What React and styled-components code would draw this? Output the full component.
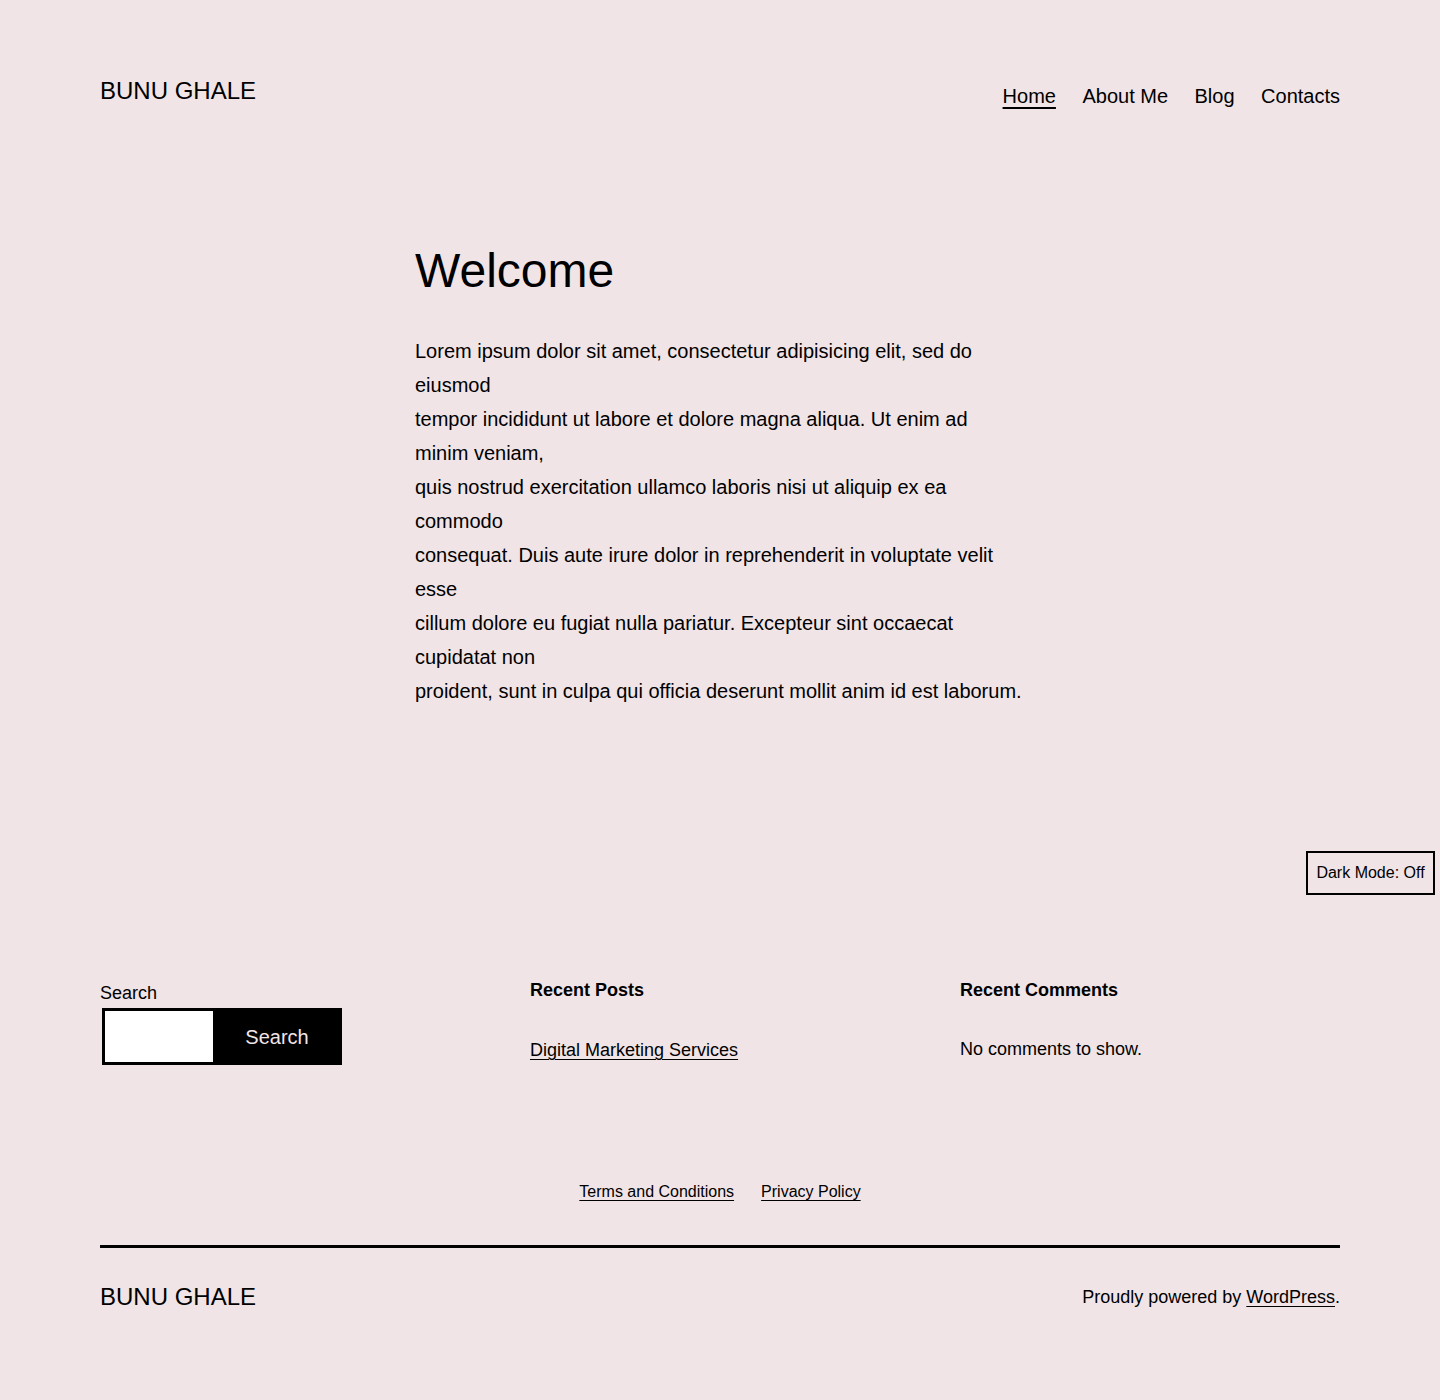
import React from "react";
import styled, { createGlobalStyle } from "styled-components";

const BG = "#f1e4e6";

const GlobalStyle = createGlobalStyle`
  html, body {
    margin: 0;
    padding: 0;
    background: ${BG};
  }
  body {
    font-family: "Liberation Sans", Arial, Helvetica, sans-serif;
    color: #000;
  }
  * { box-sizing: border-box; }
`;

const Page = styled.div`
  position: relative;
  min-height: 1400px;
  background: ${BG};
`;

const Header = styled.header`
  display: flex;
  justify-content: space-between;
  align-items: flex-start;
  padding: 76px 100px 0;
`;

const SiteTitle = styled.div`
  font-size: 24px;
  line-height: 30px;
`;

const Nav = styled.nav`
  display: flex;
  gap: 26.5px;
  margin-top: 5px;
`;

const NavLink = styled.a`
  font-size: 20px;
  line-height: 30px;
  color: #000;
  text-decoration: ${(p) => (p.$active ? "underline" : "none")};
  text-decoration-thickness: 2px;
  text-underline-offset: 4px;
  cursor: pointer;
`;

const Main = styled.main`
  width: 610px;
  margin: 129px auto 0;
`;

const Title = styled.h1`
  margin: 0 0 32px;
  font-size: 48px;
  font-weight: 400;
  line-height: 62px;
`;

const BodyText = styled.p`
  margin: 0;
  font-size: 20px;
  line-height: 34px;
`;

const DarkToggle = styled.button`
  position: absolute;
  top: 851px;
  right: 5px;
  width: 129px;
  height: 44px;
  padding: 0 8px;
  border: 2px solid #000;
  background: ${BG};
  color: #000;
  font-family: inherit;
  font-size: 16px;
  line-height: 20px;
  cursor: pointer;
`;

const Widgets = styled.section`
  display: grid;
  grid-template-columns: repeat(3, 380px);
  column-gap: 50px;
  padding: 0 100px;
  margin-top: 268px;
  align-items: start;
`;

const Widget = styled.div`
  display: flex;
  flex-direction: column;
`;

const SearchLabel = styled.label`
  margin-top: 4px;
  font-size: 18px;
  line-height: 26px;
`;

const SearchForm = styled.form`
  display: flex;
  margin: 2px 0 0 2px;
  height: 57px;
`;

const SearchInput = styled.input`
  width: 114px;
  height: 57px;
  border: 3px solid #000;
  border-radius: 0;
  background: #fff;
  outline: none;
  appearance: none;
  font-family: inherit;
  font-size: 18px;
  padding: 0 8px;
`;

const SearchButton = styled.button`
  width: 126px;
  height: 57px;
  padding: 2px 4px 0 0;
  border: none;
  background: #000;
  color: ${BG};
  font-family: inherit;
  font-size: 20px;
  cursor: pointer;
`;

const WidgetTitle = styled.h2`
  margin: 1px 0 34px;
  font-size: 18px;
  font-weight: 700;
  line-height: 26px;
`;

const WidgetLink = styled.a`
  font-size: 18px;
  line-height: 26px;
  color: #000;
  text-decoration: underline;
  text-decoration-thickness: 1px;
  text-underline-offset: 3px;
`;

const WidgetText = styled.p`
  margin: -1px 0 0;
  font-size: 18px;
  line-height: 26px;
`;

const FooterNav = styled.nav`
  display: flex;
  justify-content: center;
  gap: 27px;
  margin-top: 115px;
`;

const FooterLink = styled.a`
  font-size: 16px;
  line-height: 24px;
  color: #000;
  text-decoration: underline;
  text-decoration-thickness: 1px;
  text-underline-offset: 3px;
`;

const Divider = styled.hr`
  margin: 41px 100px 0;
  border: none;
  height: 3px;
  background: #000;
`;

const FooterBar = styled.footer`
  display: flex;
  justify-content: space-between;
  align-items: center;
  padding: 34px 100px 0;
`;

const FooterTitle = styled.div`
  font-size: 24px;
  line-height: 30px;
`;

const Powered = styled.div`
  font-size: 18px;
  line-height: 30px;
`;

const PoweredLink = styled.a`
  color: #000;
  text-decoration: underline;
  text-decoration-thickness: 1px;
  text-underline-offset: 3px;
`;

const lines = [
  "Lorem ipsum dolor sit amet, consectetur adipisicing elit, sed do eiusmod",
  "tempor incididunt ut labore et dolore magna aliqua. Ut enim ad minim veniam,",
  "quis nostrud exercitation ullamco laboris nisi ut aliquip ex ea commodo",
  "consequat. Duis aute irure dolor in reprehenderit in voluptate velit esse",
  "cillum dolore eu fugiat nulla pariatur. Excepteur sint occaecat cupidatat non",
  "proident, sunt in culpa qui officia deserunt mollit anim id est laborum.",
];

export default function App() {
  return (
    <Page>
      <GlobalStyle />
      <Header>
        <SiteTitle>BUNU GHALE</SiteTitle>
        <Nav>
          <NavLink $active>Home</NavLink>
          <NavLink>About Me</NavLink>
          <NavLink>Blog</NavLink>
          <NavLink>Contacts</NavLink>
        </Nav>
      </Header>

      <Main>
        <Title>Welcome</Title>
        <BodyText>
          {lines.map((l, i) => (
            <React.Fragment key={i}>
              {l}
              {i < lines.length - 1 && <br />}
            </React.Fragment>
          ))}
        </BodyText>
      </Main>

      <DarkToggle type="button">Dark Mode: Off</DarkToggle>

      <Widgets>
        <Widget>
          <SearchLabel htmlFor="s">Search</SearchLabel>
          <SearchForm onSubmit={(e) => e.preventDefault()}>
            <SearchInput id="s" type="text" />
            <SearchButton type="submit">Search</SearchButton>
          </SearchForm>
        </Widget>
        <Widget>
          <WidgetTitle>Recent Posts</WidgetTitle>
          <div>
            <WidgetLink>Digital Marketing Services</WidgetLink>
          </div>
        </Widget>
        <Widget>
          <WidgetTitle>Recent Comments</WidgetTitle>
          <WidgetText>No comments to show.</WidgetText>
        </Widget>
      </Widgets>

      <FooterNav>
        <FooterLink>Terms and Conditions</FooterLink>
        <FooterLink>Privacy Policy</FooterLink>
      </FooterNav>

      <Divider />

      <FooterBar>
        <FooterTitle>BUNU GHALE</FooterTitle>
        <Powered>
          Proudly powered by <PoweredLink>WordPress</PoweredLink>.
        </Powered>
      </FooterBar>
    </Page>
  );
}
